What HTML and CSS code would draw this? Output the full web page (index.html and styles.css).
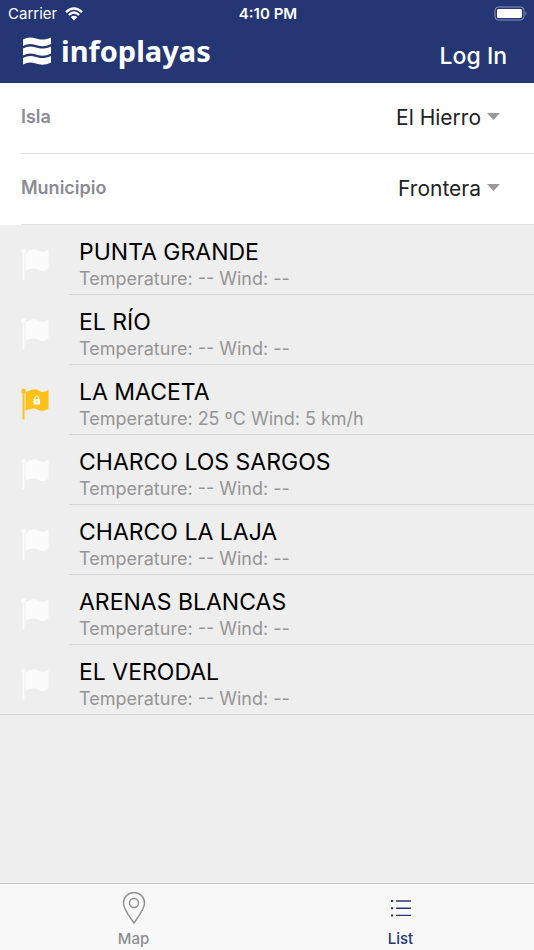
FILE: index.html
```html
<!DOCTYPE html>
<html lang="es">

<head>
    <meta charset="utf-8">
    <meta name="viewport" content="width=device-width, initial-scale=1.0">
    <title>infoplayas</title>
    <link rel="stylesheet" href="styles.css">
</head>

<body>
    <!-- shared icons -->
    <svg class="sprite" aria-hidden="true">
        <symbol id="flag" viewBox="0 0 28 32">
            <circle cx="2.5" cy="3" r="2.2" />
            <path d="M1.500 3h2v28.500h-2z" />
            <path d="M4.500 4C7 4 8 1.500 13 1.500c5 0 6 2.500 9 2.500 2.500 0 3.500-1 5.500-2.500v19c-2 1.500-3.500 2.500-6 2.500-3.500 0-5-2.500-9-2.500-3.500 0-5 1.500-8 2z" />
        </symbol>
    </svg>

    <header class="header">
        <div class="status">
            <div class="carrier">
                <span>Carrier</span>
                <svg class="wifi" viewBox="0 0 18 14" aria-hidden="true">
                    <path d="M1 5.200Q9-2.300 17 5.200M3.900 8Q9 3.200 14.100 8" />
                    <path class="dot" d="M9 13.500 5.800 10.100Q9 7.600 12.200 10.100z" />
                </svg>
            </div>
            <span class="time">4:10 PM</span>
            <svg class="battery" viewBox="0 0 34 16" aria-hidden="true">
                <rect class="case" x="1" y="1" width="29" height="13" rx="3.500" />
                <rect x="3" y="3" width="25" height="9" rx="1.500" />
                <path class="tip" d="M31.500 5.500q2 2 0 4z" />
            </svg>
        </div>
        <div class="bar">
            <a class="logo" href="#">
                <svg viewBox="0 0 28 28" aria-hidden="true">
                    <path d="M0 2.500C4 .2 8-.2 12 1.200 18 3.200 22 3.200 28 .500V7C22 9.800 18 9.800 12 7.800 8 6.400 4 6.800 0 9z" />
                    <path d="M0 11.500C4 9.200 8 8.800 12 10.200 18 12.200 22 12.200 28 9.500V16.500C22 19.300 18 19.300 12 17.300 8 15.900 4 16.300 0 18.500z" />
                    <path d="M0 21C4 18.700 8 18.300 12 19.700 18 21.700 22 21.700 28 19V25.500C22 28.300 18 28.300 12 26.300 8 24.900 4 25.300 0 27.500z" />
                </svg>
                <span>infoplayas</span>
            </a>
            <button type="button" class="login">Log In</button>
        </div>
    </header>

    <form class="filters">
        <div class="field">
            <label for="isla">Isla</label>
            <select id="isla" name="isla">
                <option>El Hierro</option>
            </select>
        </div>
        <div class="field">
            <label for="municipio">Municipio</label>
            <select id="municipio" name="municipio">
                <option>Frontera</option>
            </select>
        </div>
    </form>

    <main>
        <ul class="beaches">
            <li>
                <svg class="flag"><use href="#flag" /></svg>
                <div class="info">
                    <h2>PUNTA GRANDE</h2>
                    <p>Temperature: -- Wind: --</p>
                </div>
            </li>
            <li>
                <svg class="flag"><use href="#flag" /></svg>
                <div class="info">
                    <h2>EL RÍO</h2>
                    <p>Temperature: -- Wind: --</p>
                </div>
            </li>
            <li>
                <svg class="flag yellow" viewBox="0 0 28 32">
                    <use href="#flag" />
                    <rect class="lock" x="12.500" y="11" width="6.500" height="5.500" rx=".6" />
                    <path class="shackle" d="M14 11.200V9.800a1.750 1.750 0 0 1 3.500 0v1.400" />
                    <path d="M15.300 12.800h1v2h-1z" />
                </svg>
                <div class="info">
                    <h2>LA MACETA</h2>
                    <p>Temperature: 25 ºC Wind: 5 km/h</p>
                </div>
            </li>
            <li>
                <svg class="flag"><use href="#flag" /></svg>
                <div class="info">
                    <h2>CHARCO LOS SARGOS</h2>
                    <p>Temperature: -- Wind: --</p>
                </div>
            </li>
            <li>
                <svg class="flag"><use href="#flag" /></svg>
                <div class="info">
                    <h2>CHARCO LA LAJA</h2>
                    <p>Temperature: -- Wind: --</p>
                </div>
            </li>
            <li>
                <svg class="flag"><use href="#flag" /></svg>
                <div class="info">
                    <h2>ARENAS BLANCAS</h2>
                    <p>Temperature: -- Wind: --</p>
                </div>
            </li>
            <li>
                <svg class="flag"><use href="#flag" /></svg>
                <div class="info">
                    <h2>EL VERODAL</h2>
                    <p>Temperature: -- Wind: --</p>
                </div>
            </li>
        </ul>
    </main>

    <nav class="tabs">
        <a href="#map">
            <svg viewBox="0 0 32 32" aria-hidden="true">
                <path d="M16 31C12 25 5.500 17.500 5.500 11a10.500 10.500 0 0 1 21 0C26.500 17.500 20 25 16 31z" />
                <circle cx="16" cy="11" r="4.500" />
            </svg>
            <span>Map</span>
        </a>
        <a href="#list" class="active">
            <svg viewBox="0 0 32 32" aria-hidden="true">
                <path d="M11 9H26M11 16.200H26M11 23.400H26" />
                <path class="bullets" d="M6 9h2.200M6 16.200h2.200M6 23.400h2.200" />
            </svg>
            <span>List</span>
        </a>
    </nav>
</body>

</html>
```
FILE: styles.css
```css
* {
    box-sizing: border-box;
}

body {
    display: flex;
    flex-direction: column;
    min-height: 100vh;
    margin: 0;
    background-color: #eee;
    font-family: Inter, "Liberation Sans", sans-serif;
}

a {
    text-decoration: none;
}

.sprite {
    display: none;
}

.header {
    padding-bottom: 8px;
    background-color: #253674;
    color: #fff;
}

.status {
    display: grid;
    grid-template-columns: 1fr auto 1fr;
    align-items: center;
    padding: 0 6px 0 8px;
    font-size: 15px;
    line-height: 27px;
}

.carrier {
    display: flex;
    align-items: center;
    gap: 8px;
}

.wifi {
    width: 18px;
    height: 14px;
    fill: none;
    stroke: #fff;
    stroke-width: 2.4;
}

.wifi .dot {
    fill: #fff;
    stroke: none;
}

.time {
    font-weight: 600;
}

.battery {
    width: 34px;
    height: 16px;
    justify-self: end;
    fill: #fff;
}

.battery .case {
    fill: none;
    stroke: #8d96b7;
}

.battery .tip {
    fill: #8d96b7;
}

.bar {
    display: flex;
    justify-content: space-between;
    align-items: flex-start;
    height: 48px;
    padding: 0 27px 0 23px;
}

.logo {
    display: flex;
    align-items: center;
    gap: 10px;
    color: #fff;
    font-family: "Noto Sans", sans-serif;
    font-size: 29px;
    font-weight: 700;
    line-height: 47px;
}

.logo svg {
    width: 28px;
    height: 28px;
    fill: #fff;
}

.login {
    padding: 14px 0 0;
    border: none;
    background: none;
    color: #fff;
    font-family: inherit;
    font-size: 23px;
    font-weight: 500;
    line-height: 30px;
    cursor: pointer;
}

.filters {
    padding-left: 21px;
    background-color: #fff;
}

.field {
    display: flex;
    align-items: center;
    justify-content: space-between;
    height: 71px;
    padding-right: 34px;
    border-bottom: 1px solid #dedede;
}

.field label {
    color: #898c94;
    font-size: 18px;
    font-weight: 600;
    line-height: 24px;
    padding-bottom: 2px;
}

.field select {
    appearance: none;
    padding: 0 19px 0 0;
    border: none;
    /* small grey arrow */
    background: url("data:image/svg+xml,%3Csvg xmlns='http://www.w3.org/2000/svg' viewBox='0 0 13 7'%3E%3Cpath fill='%23999' d='M0 0h13L6.500 7z'/%3E%3C/svg%3E") no-repeat right 11px / 13px 7px;
    color: #222;
    font-family: inherit;
    font-size: 21px;
    line-height: 32px;
    text-align-last: right;
}

main {
    flex: 1;
}

.beaches {
    margin: 0;
    padding: 0;
    border-bottom: 1px solid #d6d6d6;
    list-style: none;
}

.beaches li {
    display: flex;
    align-items: center;
    padding-left: 21px;
}

.flag {
    width: 28px;
    height: 32px;
    margin-top: 8px;
    fill: #fbfbfb;
}

.flag.yellow {
    fill: #ffc117;
}

.flag .lock {
    fill: #fff;
}

.flag .shackle {
    fill: none;
    stroke: #fff;
}

.info {
    flex: 1;
    margin-left: 20px;
    padding: 13px 0 3px 10px;
    border-bottom: 1px solid #d6d6d6;
}

.beaches li:last-child .info {
    border-bottom: none;
}

.info h2 {
    margin: 0;
    color: #000;
    font-size: 23px;
    font-weight: 400;
    line-height: 29px;
}

.info p {
    margin: 0;
    color: #959595;
    font-size: 18px;
    line-height: 24px;
}

.tabs {
    display: flex;
    height: 67px;
    border-top: 1px solid #c6c6c6;
    background-color: #f8f8f8;
}

.tabs a {
    flex: 1;
    display: flex;
    flex-direction: column;
    align-items: center;
    padding-top: 8px;
    color: #8e8e8e;
    font-size: 15px;
    font-weight: 500;
    line-height: 20px;
}

.tabs svg {
    width: 32px;
    height: 32px;
    margin-bottom: 5px;
    fill: none;
    stroke: currentColor;
    stroke-width: 1.4;
}

.tabs .bullets {
    stroke-width: 2;
}

.tabs a.active {
    color: #253674;
}
```
